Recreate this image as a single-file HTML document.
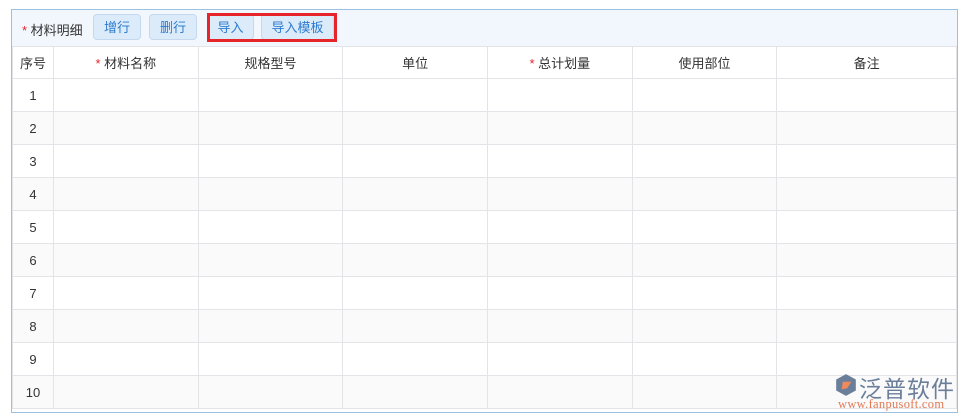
<!DOCTYPE html>
<html><head><meta charset="utf-8"><style>
body{margin:0;width:965px;height:419px;background:#fff;font-family:"Liberation Sans","Noto Sans CJK SC",sans-serif;font-size:13px;color:#333;position:relative;overflow:hidden}
.box{position:absolute;left:11px;top:9px;width:945px;height:402px;border:1px solid #9cc0e0;overflow:hidden}
.tb{position:absolute;left:0;top:0;width:945px;height:36px;background:#f2f7fd;border-bottom:1px solid #dde3ea}
.btn{position:absolute;top:4px;height:26px;line-height:26px;text-align:center;background:#dcebf9;border:1px solid #c4d9ee;border-radius:4px;color:#2d7bd0;font-size:13px;box-sizing:border-box}
.red{position:absolute;left:195px;top:3px;width:130px;height:29px;border:3px solid #e5252a;box-sizing:border-box}
.star{color:#e5252a}
table{position:absolute;left:0;top:36px;border-collapse:collapse;table-layout:fixed}
td{border:1px solid #e2e4e8;height:32px;padding:0;text-align:center;font-size:13px}
tr:nth-child(odd) td{background:#fafafa}
tr:first-child td{background:#fff;height:31px}
</style></head><body>
<div class="box">
<div class="tb">
<div style="position:absolute;left:10px;top:10px"><span class="star">*</span> 材料明细</div>
<div class="btn" style="left:81px;width:48px">增行</div>
<div class="btn" style="left:137px;width:48px">删行</div>
<div class="btn" style="left:195px;width:47px">导入</div>
<div class="btn" style="left:249px;width:73px">导入模板</div>
<div class="red"></div>
</div>
<table>
<colgroup><col style="width:41px"><col style="width:145px"><col style="width:145px"><col style="width:145px"><col style="width:145px"><col style="width:145px"><col style="width:180px"></colgroup>
<tr><td>序号</td><td><span class="star">*</span> 材料名称</td><td>规格型号</td><td>单位</td><td><span class="star">*</span> 总计划量</td><td>使用部位</td><td>备注</td></tr>
<tr><td>1</td><td></td><td></td><td></td><td></td><td></td><td></td></tr>
<tr><td>2</td><td></td><td></td><td></td><td></td><td></td><td></td></tr>
<tr><td>3</td><td></td><td></td><td></td><td></td><td></td><td></td></tr>
<tr><td>4</td><td></td><td></td><td></td><td></td><td></td><td></td></tr>
<tr><td>5</td><td></td><td></td><td></td><td></td><td></td><td></td></tr>
<tr><td>6</td><td></td><td></td><td></td><td></td><td></td><td></td></tr>
<tr><td>7</td><td></td><td></td><td></td><td></td><td></td><td></td></tr>
<tr><td>8</td><td></td><td></td><td></td><td></td><td></td><td></td></tr>
<tr><td>9</td><td></td><td></td><td></td><td></td><td></td><td></td></tr>
<tr><td>10</td><td></td><td></td><td></td><td></td><td></td><td></td></tr>
</table>
</div>
<svg style="position:absolute;left:834px;top:373px" width="24" height="24" viewBox="0 0 22 22"><path d="M11 1 L20 6 L20 16 L11 21 L2 16 L2 6Z" fill="#6b7f9a"/><path d="M8 8 L16 8 L12 14 L7 15Z" fill="#f08a5d"/></svg>
<div style="position:absolute;left:859px;top:370px;font-size:23px;color:#6b7f9a;letter-spacing:1px">泛普软件</div>
<div style="position:absolute;left:838px;top:397px;font-size:12.5px;color:#e07a55;font-family:'Liberation Serif',serif;letter-spacing:0.3px">www.fanpusoft.com</div>
</body></html>
